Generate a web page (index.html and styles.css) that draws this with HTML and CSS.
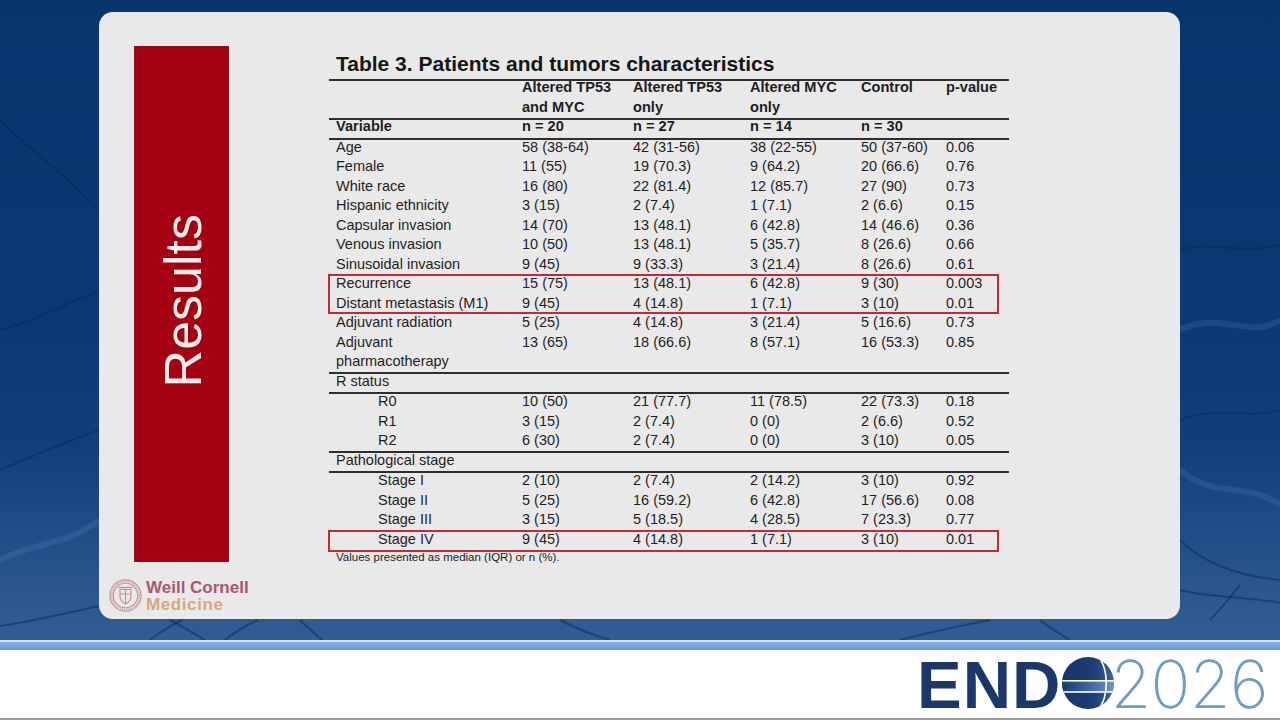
FILE: index.html
```html
<!DOCTYPE html>
<html lang="en">
<head>
<meta charset="utf-8">
<title>Results – Table 3</title>
<link rel="stylesheet" href="styles.css">
</head>
<body>
<div class="stage">
  <svg class="bg-veins" width="1280" height="640" viewBox="0 0 1280 640" aria-hidden="true">
    <g fill="none" stroke="#062a5a" stroke-opacity="0.5" stroke-width="2">
      <path d="M0 330 C40 320 70 300 99 292"/>
      <path d="M0 120 C30 150 60 170 99 210"/>
      <path d="M0 470 C35 455 70 440 99 430"/>
      <path d="M0 626 C40 620 70 612 99 606"/>
      <path d="M150 640 C160 632 170 626 182 620"/>
      <path d="M170 620 C185 628 195 634 205 640"/>
      <path d="M225 640 C235 632 245 626 258 620"/>
      <path d="M300 620 C310 630 318 636 322 640"/>
      <path d="M560 620 C575 628 590 634 610 640"/>
      <path d="M1180 250 C1210 240 1240 255 1280 245"/>
      <path d="M1180 420 C1215 405 1250 420 1280 410"/>
      <path d="M1180 590 C1210 598 1245 596 1280 603"/>
      <path d="M1210 620 C1220 610 1228 600 1240 585"/>
      <path d="M1180 540 C1200 560 1230 575 1280 580"/>
      <path d="M900 640 C930 632 960 626 990 620"/>
      <path d="M1040 620 C1050 628 1060 634 1070 640"/>
    </g>
    <g fill="none" stroke="#5f86bd" stroke-opacity="0.22" stroke-width="6">
      <path d="M0 560 C40 540 70 545 99 520"/>
      <path d="M1180 330 C1220 310 1250 340 1280 320"/>
      <path d="M1180 470 C1215 500 1245 480 1280 505"/>
    </g>
  </svg>

  <div class="card">
    <div class="card-main">
      <div class="section-bar">
        <span class="section-title">Results</span>
      </div>

      <div class="content">
        <h1 class="table-title">Table 3. Patients and tumors characteristics</h1>
        <div class="stats-table">
          <div class="row head"><span></span><span>Altered TP53</span><span>Altered TP53</span><span>Altered MYC</span><span>Control</span><span>p-value</span></div>
          <div class="row head rule"><span></span><span>and MYC</span><span>only</span><span>only</span><span></span><span></span></div>
          <div class="row head rule"><span>Variable</span><span>n = 20</span><span>n = 27</span><span>n = 14</span><span>n = 30</span><span></span></div>

          <div class="row"><span>Age</span><span>58 (38-64)</span><span>42 (31-56)</span><span>38 (22-55)</span><span>50 (37-60)</span><span>0.06</span></div>
          <div class="row"><span>Female</span><span>11 (55)</span><span>19 (70.3)</span><span>9 (64.2)</span><span>20 (66.6)</span><span>0.76</span></div>
          <div class="row"><span>White race</span><span>16 (80)</span><span>22 (81.4)</span><span>12 (85.7)</span><span>27 (90)</span><span>0.73</span></div>
          <div class="row"><span>Hispanic ethnicity</span><span>3 (15)</span><span>2 (7.4)</span><span>1 (7.1)</span><span>2 (6.6)</span><span>0.15</span></div>
          <div class="row"><span>Capsular invasion</span><span>14 (70)</span><span>13 (48.1)</span><span>6 (42.8)</span><span>14 (46.6)</span><span>0.36</span></div>
          <div class="row"><span>Venous invasion</span><span>10 (50)</span><span>13 (48.1)</span><span>5 (35.7)</span><span>8 (26.6)</span><span>0.66</span></div>
          <div class="row"><span>Sinusoidal invasion</span><span>9 (45)</span><span>9 (33.3)</span><span>3 (21.4)</span><span>8 (26.6)</span><span>0.61</span></div>
          <div class="row"><span>Recurrence</span><span>15 (75)</span><span>13 (48.1)</span><span>6 (42.8)</span><span>9 (30)</span><span>0.003</span></div>
          <div class="row"><span>Distant metastasis (M1)</span><span>9 (45)</span><span>4 (14.8)</span><span>1 (7.1)</span><span>3 (10)</span><span>0.01</span></div>
          <div class="row"><span>Adjuvant radiation</span><span>5 (25)</span><span>4 (14.8)</span><span>3 (21.4)</span><span>5 (16.6)</span><span>0.73</span></div>
          <div class="row"><span>Adjuvant</span><span>13 (65)</span><span>18 (66.6)</span><span>8 (57.1)</span><span>16 (53.3)</span><span>0.85</span></div>
          <div class="row rule"><span>pharmacotherapy</span><span></span><span></span><span></span><span></span><span></span></div>
          <div class="row rule"><span>R status</span><span></span><span></span><span></span><span></span><span></span></div>
          <div class="row"><span class="sub">R0</span><span>10 (50)</span><span>21 (77.7)</span><span>11 (78.5)</span><span>22 (73.3)</span><span>0.18</span></div>
          <div class="row"><span class="sub">R1</span><span>3 (15)</span><span>2 (7.4)</span><span>0 (0)</span><span>2 (6.6)</span><span>0.52</span></div>
          <div class="row rule"><span class="sub">R2</span><span>6 (30)</span><span>2 (7.4)</span><span>0 (0)</span><span>3 (10)</span><span>0.05</span></div>
          <div class="row rule"><span>Pathological stage</span><span></span><span></span><span></span><span></span><span></span></div>
          <div class="row"><span class="sub">Stage I</span><span>2 (10)</span><span>2 (7.4)</span><span>2 (14.2)</span><span>3 (10)</span><span>0.92</span></div>
          <div class="row"><span class="sub">Stage II</span><span>5 (25)</span><span>16 (59.2)</span><span>6 (42.8)</span><span>17 (56.6)</span><span>0.08</span></div>
          <div class="row"><span class="sub">Stage III</span><span>3 (15)</span><span>5 (18.5)</span><span>4 (28.5)</span><span>7 (23.3)</span><span>0.77</span></div>
          <div class="row"><span class="sub">Stage IV</span><span>9 (45)</span><span>4 (14.8)</span><span>1 (7.1)</span><span>3 (10)</span><span>0.01</span></div>
          <p class="table-note">Values presented as median (IQR) or n (%).</p>

          <div class="highlight hl-metastasis"></div>
          <div class="highlight hl-stage"></div>
        </div>
      </div>
    </div>

    <div class="wcm-logo">
      <svg class="wcm-seal" width="33" height="33" viewBox="0 0 33 33" aria-hidden="true">
        <g fill="none" stroke="#c29494" stroke-width="1.1">
          <circle cx="16.5" cy="16.5" r="15.6"/>
          <circle cx="16.5" cy="16.5" r="12.2"/>
          <circle cx="16.5" cy="16.5" r="13.9" stroke-dasharray="1 1.2" stroke-width="1.6"/>
          <path d="M11 10.5 H22 V17 C22 21 19.5 23.5 16.5 25 C13.5 23.5 11 21 11 17 Z"/>
          <path d="M11 15 H22 M16.5 10.5 V25"/>
          <path d="M9.5 8.5 H23.5" stroke-width="1.4"/>
        </g>
      </svg>
      <div class="wcm-text">
        <span class="wcm-line1">Weill Cornell</span>
        <span class="wcm-line2">Medicine</span>
      </div>
    </div>
  </div>
</div>

<footer class="footer">
  <div class="footer-band"></div>
  <div class="endo-row">
    <span class="endo-word">END</span>
    <svg class="endo-globe" width="52" height="52" viewBox="0 0 52 52" aria-hidden="true">
      <defs>
        <clipPath id="globe-clip"><circle cx="26" cy="26" r="26"/></clipPath>
        <linearGradient id="band-grad" x1="0" y1="0" x2="1" y2="0">
          <stop offset="0" stop-color="#1b3a70"/>
          <stop offset="0.55" stop-color="#3d69a6"/>
          <stop offset="1" stop-color="#6f96c8"/>
        </linearGradient>
        <linearGradient id="cap-grad" x1="0" y1="0" x2="1" y2="0">
          <stop offset="0" stop-color="#17346a"/>
          <stop offset="0.6" stop-color="#1d3d74"/>
          <stop offset="1" stop-color="#3b64a0"/>
        </linearGradient>
      </defs>
      <g clip-path="url(#globe-clip)">
        <rect width="52" height="52" fill="url(#cap-grad)"/>
        <rect y="24" width="52" height="11" fill="url(#band-grad)"/>
        <rect y="23" width="52" height="1.6" fill="#ffffff"/>
        <rect y="34.2" width="52" height="1.6" fill="#ffffff"/>
        <path d="M36 -1 C47 12 47 40 36 53" fill="none" stroke="#ffffff" stroke-width="1.6"/>
      </g>
    </svg>
    <span class="endo-year">2026</span>
  </div>
</footer>
</body>
</html>
```

FILE: styles.css
```css
html, body {
  margin: 0;
  padding: 0;
}

body {
  width: 1280px;
  height: 720px;
  overflow: hidden;
  font-family: "Liberation Sans", Arial, sans-serif;
  background: #ffffff;
}

/* ---------- blue stage ---------- */
.stage {
  position: relative;
  height: 640px;
  box-sizing: border-box;
  padding: 12px 0 0 99px;
  background: linear-gradient(180deg, #08356e 0%, #0b3973 50%, #123f7a 70%, #24508a 86%, #335c93 100%);
}

.bg-veins {
  position: absolute;
  left: 0;
  top: 0;
}

.card {
  position: relative;
  width: 1081px;
  height: 607px;
  box-sizing: border-box;
  padding: 34px 0 0 10px;
  background: #e9e9e9;
  border-radius: 14px;
  display: flex;
  flex-direction: column;
}

.card-main {
  display: flex;
  align-items: flex-start;
}

/* ---------- red section bar ---------- */
.section-bar {
  margin-left: 25px;
  width: 95px;
  height: 516px;
  box-sizing: border-box;
  background: #a40012;
  border: 1px solid #8e1022;
  display: flex;
  align-items: center;
  justify-content: center;
  padding-bottom: 6px;
}

.section-title {
  writing-mode: vertical-rl;
  transform: rotate(180deg);
  color: #f7ecec;
  font-size: 52px;
  line-height: 1;
  margin-left: 3px;
}

/* ---------- table ---------- */
.content {
  margin-left: 100px;
  width: 680px;
  padding-top: 6px;
  color: #1e1e1e;
}

.table-title {
  margin: 0 0 3px 7px;
  font-size: 21px;
  line-height: 24px;
  font-weight: bold;
  color: #161616;
}

.stats-table {
  position: relative;
  border-top: 2px solid #2e2e2e;
}

.row {
  display: grid;
  grid-template-columns: 186px 111px 117px 111px 85px 70px;
  height: 19.5px;
  box-sizing: border-box;
  font-size: 14.5px;
  line-height: 14px;
}

.row > span {
  padding-left: 7px;
  white-space: nowrap;
}

.row > span.sub {
  padding-left: 49px;
}

.row.head {
  font-weight: bold;
  font-size: 14.6px;
  line-height: 13px;
}

.row.head.rule {
  height: 19.5px;
  border-bottom: 2px solid #2e2e2e;
}

.row.rule {
  height: 20px;
  border-bottom: 2px solid #2e2e2e;
}

.table-note {
  margin: 0;
  padding-left: 7px;
  font-size: 11.5px;
  line-height: 12px;
  color: #222;
}

.highlight {
  position: absolute;
  left: -1px;
  width: 671px;
  box-sizing: border-box;
  border: 2px solid #c42a36;
}

.hl-metastasis {
  top: 193px;
  height: 40px;
}

.hl-stage {
  top: 449px;
  height: 22px;
}

/* ---------- Weill Cornell logo ---------- */
.wcm-logo {
  margin-top: 16px;
  display: flex;
  align-items: flex-start;
}

.wcm-seal {
  display: block;
  flex-shrink: 0;
}

.wcm-text {
  margin-left: 4px;
  display: flex;
  flex-direction: column;
  font-weight: bold;
  font-size: 17px;
  line-height: 17px;
  letter-spacing: 0;
}

.wcm-line1 {
  color: #a65870;
}

.wcm-line2 {
  color: #d7a877;
  letter-spacing: 0.6px;
}

/* ---------- footer / ENDO logo ---------- */
.footer {
  height: 80px;
  box-sizing: border-box;
  border-top: 2px solid #cfe4f2;
  border-bottom: 2px solid #9c9c9c;
  background: #ffffff;
}

.footer-band {
  height: 8px;
  background: linear-gradient(180deg, #8db4df 0%, #6b98cd 100%);
}

.endo-row {
  height: 68px;
  box-sizing: border-box;
  padding: 1px 0 0 917px;
  display: flex;
  align-items: flex-start;
}

.endo-word {
  flex-shrink: 0;
  font-family: "Liberation Sans", Arial, sans-serif;
  font-weight: bold;
  font-size: 67px;
  line-height: 67px;
  letter-spacing: 1px;
  color: #1b3868;
}

.endo-globe {
  display: block;
  flex-shrink: 0;
  margin: 6px 0 0 1px;
}

.endo-year {
  flex-shrink: 0;
  margin-left: -4px;
  font-family: Inter, "Open Sans", "Liberation Sans", sans-serif;
  font-weight: 250;
  font-size: 66px;
  line-height: 67px;
  letter-spacing: -0.6px;
  color: #6f9cc6;
}
```
